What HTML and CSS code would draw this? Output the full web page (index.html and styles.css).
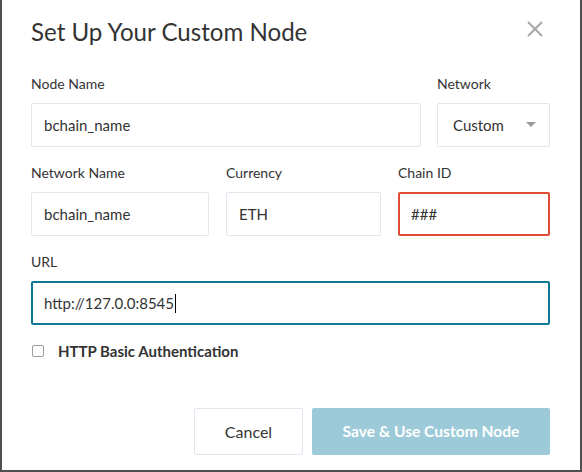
FILE: index.html
```html
<!DOCTYPE html>
<html>
<head>
<meta charset="utf-8">
<link rel="stylesheet" href="styles.css">
</head>
<body>
<div class="modal">
  <div class="header">
    <h1 class="title">Set Up Your Custom Node</h1>
    <svg class="close" width="16" height="16" viewBox="0 0 16 16"><path d="M1 1 L15 15 M15 1 L1 15" stroke="#a8a8a8" stroke-width="2" fill="none"/></svg>
  </div>
  <div class="form">
    <div class="row">
      <div class="field f-node">
        <div class="label">Node Name</div>
        <div class="input">bchain_name</div>
      </div>
      <div class="field f-net">
        <div class="label">Network</div>
        <div class="input select"><span>Custom</span><svg width="10" height="6" viewBox="0 0 10 6"><path d="M0 0 L10 0 L5 5 Z" fill="#9a9a9a"/></svg></div>
      </div>
    </div>
    <div class="row">
      <div class="field f-nname">
        <div class="label">Network Name</div>
        <div class="input">bchain_name</div>
      </div>
      <div class="field f-cur">
        <div class="label">Currency</div>
        <div class="input">ETH</div>
      </div>
      <div class="field f-chain">
        <div class="label">Chain ID</div>
        <div class="input error">###</div>
      </div>
    </div>
    <div class="row">
      <div class="field f-url">
        <div class="label">URL</div>
        <div class="input focus">http://127.0.0:8545<span class="caret"></span></div>
      </div>
    </div>
    <label class="check">
      <span class="box"></span>
      <span class="check-text">HTTP Basic Authentication</span>
    </label>
  </div>
  <div class="footer">
    <div class="btn btn-cancel">Cancel</div>
    <div class="btn btn-save">Save &amp; Use Custom Node</div>
  </div>
</div>
</body>
</html>
```

FILE: styles.css
```css
html, body {
  margin: 0;
  padding: 0;
  background: #fff;
}
body {
  font-family: Lato, "Open Sans", sans-serif;
  color: #333;
}
.modal {
  width: 582px;
  height: 472px;
  box-sizing: border-box;
  border: 2px solid #4f4f4f;
  border-top: none;
  background: #fff;
  padding: 0 30px 0 29px;
  display: flex;
  flex-direction: column;
}
.header {
  display: flex;
  align-items: center;
  justify-content: space-between;
  height: 62px;
}
.title {
  margin: 0;
  font-size: 24.1px;
  font-weight: 400;
  color: #333;
}
.close {
  margin-right: 7px;
  margin-top: -4px;
}
.form {
  display: flex;
  flex-direction: column;
  gap: 16px;
  margin-top: 12px;
}
.row {
  display: flex;
  gap: 16px;
}
.row + .row {
  gap: 17px;
}
.field {
  display: flex;
  flex-direction: column;
}
.label {
  font-size: 14px;
  line-height: 20px;
  margin-bottom: 9px;
  color: #333;
}
.input {
  height: 44px;
  box-sizing: border-box;
  border: 1px solid #e0e7ef;
  border-radius: 2px;
  padding: 0 12px;
  display: flex;
  align-items: center;
  font-size: 15px;
  color: #333;
}
.f-node { width: 390px; }
.f-net { width: 113px; }
.f-nname { width: 178px; }
.f-cur { width: 155px; }
.f-chain { width: 152px; }
.f-url { width: 519px; }
.select {
  justify-content: space-between;
  padding: 0 13px 0 15px;
}
.error {
  border: 2px solid #e04b36;
  padding-left: 11px;
}
.focus {
  border: 2px solid #0f7896;
  padding-left: 11px;
}
.caret {
  display: inline-block;
  width: 1px;
  height: 19px;
  background: #000;
  margin-left: 1px;
}
.check {
  display: flex;
  align-items: center;
  margin-top: -1px;
  height: 22px;
}
.box {
  width: 10px;
  height: 10px;
  border: 1px solid #9a9a9a;
  border-radius: 2px;
  margin-left: 1px;
}
.check-text {
  margin-left: 14px;
  font-weight: 700;
  font-size: 15px;
}
.footer {
  display: flex;
  justify-content: flex-end;
  gap: 9px;
  margin-top: auto;
  margin-bottom: 15px;
}
.btn {
  height: 47px;
  box-sizing: border-box;
  display: flex;
  align-items: center;
  justify-content: center;
  font-size: 16px;
  border-radius: 2px;
  padding-bottom: 1px;
}
.btn-cancel {
  width: 109px;
  border: 1px solid #e0e7ef;
  color: #333;
}
.btn-save {
  width: 238px;
  background: #9ccad8;
  color: #fff;
  font-weight: 700;
  font-size: 15.6px;
}
```
